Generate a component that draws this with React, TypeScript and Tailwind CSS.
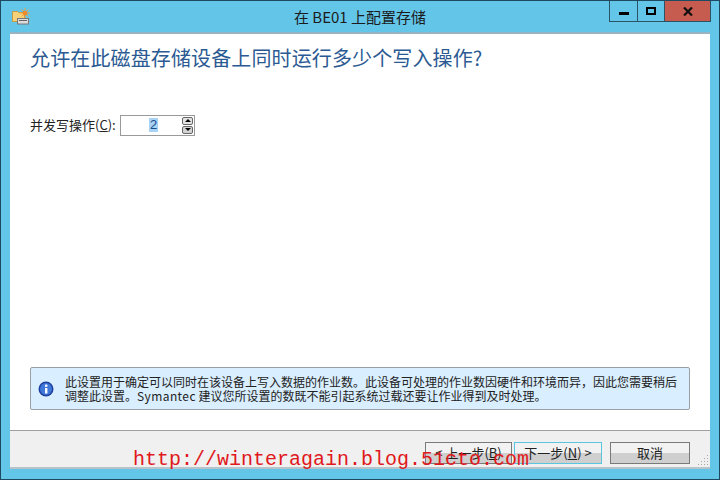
export default function App() {
  const cjk = { fontFamily: '"Noto Sans CJK SC", sans-serif' };
  const grip = [[9,0],[6,3],[9,3],[3,6],[6,6],[9,6],[0,9],[3,9],[6,9],[9,9]];
  return (
    <div className="relative w-[720px] h-[480px] overflow-hidden bg-[#63c6e9] border border-[#1d4a60] flex flex-col" style={{ fontFamily: '"Noto Sans CJK SC", "Noto Sans", sans-serif' }}>
      <div className="h-[31px] shrink-0 flex items-start relative">
        <svg className="absolute left-[11px] top-[7px]" width="18" height="17" viewBox="0 0 18 17">
          <path d="M0.5 3.5h5l1 1h6v9h-12z" fill="#f5d27a" stroke="#c79a45" strokeWidth="1" />
          <circle cx="13" cy="5" r="2.5" fill="#f08a28" />
          <path d="M13 0v2M13 8v2M8 5h2M16 5h2M9.5 1.5l1.5 1.5M15 7l1.5 1.5M9.5 8.5L11 7M15 3l1.5-1.5" stroke="#f0a040" strokeWidth="1" />
          <rect x="5.5" y="10.5" width="11" height="5.5" fill="#dcdcdc" stroke="#777" />
          <rect x="7" y="12" width="8" height="1" fill="#666" />
        </svg>
        <div className="absolute left-0 right-0 top-[6px] text-center text-[15px] leading-[20px] text-[#1b1b1b]">在 BE01 上配置存储</div>
        <div className="absolute right-[8px] top-0 flex h-[21px] border border-t-0 border-[#2a5368]">
          <div className="w-[28px] flex items-center justify-center border-r border-[#2a5368]"><div className="w-[10px] h-[3px] mt-[4px] bg-black" /></div>
          <div className="w-[26px] flex items-center justify-center"><div className="w-[10px] h-[8px] border-2 border-black" /></div>
          <div className="w-[46px] flex items-center justify-center bg-[#c65b4f] border-l border-[#2a5368]">
            <svg width="10" height="9" viewBox="0 0 10 9"><path d="M1 0.5l8 8M9 0.5l-8 8" stroke="#111" strokeWidth="2.2" /></svg>
          </div>
        </div>
      </div>
      <div className="mx-[9px] flex-1 flex flex-col min-h-0 border-t-2 border-[#97b4c2]">
        <div className="flex-1 bg-white px-[20px] flex flex-col">
          <h1 className="mt-[9px] text-[20px] leading-[30px] font-normal text-[#2b5a93] tracking-[0.13px]" style={cjk}>允许在此磁盘存储设备上同时运行多少个写入操作?</h1>
          <div className="mt-[41px] flex items-center h-[22px] text-[13px] text-[#222]">
            <span className="w-[90px]">并发写操作(<u>C</u>):</span>
            <div className="w-[75px] h-[21px] border border-[#9a9a9a] bg-white relative flex items-center">
              <span className="ml-[28px] px-[1px] bg-[#a9d3f5] text-[#1a4a8a] leading-[14px]" style={{ fontFamily: '"Liberation Sans", sans-serif' }}>2</span>
              <div className="absolute right-[1px] top-[1px] w-[11px] flex flex-col gap-[1px]">
                <div className="h-[8px] rounded-[2px] border border-[#666] bg-[#e4e4e4] flex items-center justify-center"><div className="w-0 h-0 border-x-[3px] border-x-transparent border-b-[3px] border-b-black" /></div>
                <div className="h-[8px] rounded-[2px] border border-[#666] bg-[#d4d4d4] flex items-center justify-center"><div className="w-0 h-0 border-x-[3px] border-x-transparent border-t-[3px] border-t-black" /></div>
              </div>
            </div>
          </div>
          <div className="flex-1" />
          <div className="mb-[20px] h-[43px] w-[660px] rounded-[2px] border border-[#9a9fa5] bg-[#d9eeff] flex items-center">
            <svg className="ml-[7px] shrink-0" width="16" height="16" viewBox="0 0 16 16">
              <circle cx="8" cy="8" r="7.5" fill="#1f3f9e" />
              <circle cx="8" cy="8" r="6" fill="#3f78d8" />
              <rect x="7" y="7" width="2.4" height="5.5" fill="#fff" />
              <rect x="7" y="3.6" width="2.4" height="2.2" fill="#fff" />
            </svg>
            <p className="ml-[11px] text-[12px] leading-[14px] text-[#222] whitespace-nowrap" style={cjk}>
              此设置用于确定可以同时在该设备上写入数据的作业数。此设备可处理的作业数因硬件和环境而异{"\uFF0C"}因此您需要稍后<br />
              调整此设置。<span className="tracking-[0.4px]">Symantec</span> 建议您所设置的数既不能引起系统过载还要让作业得到及时处理。
            </p>
          </div>
        </div>
        <div className="h-[39px] shrink-0 bg-[#f0f0f0] border-t border-[#a0a0a0] border-b-2 border-b-[#b7c3c9] flex items-start justify-end pt-[11px] pr-[20px] text-[13px] text-[#222] relative">
          <button className="w-[87px] h-[22px] border border-[#7a7a7a] bg-[linear-gradient(#f2f2f2_50%,#cfcfcf_50%)] leading-[20px]">&lt; 上一步(<u>B</u>)</button>
          <button className="ml-[2px] w-[88px] h-[22px] border border-[#5bc5e0] bg-[linear-gradient(#f2f2f2_50%,#cfcfcf_50%)] leading-[20px]">下一步(<u>N</u>) &gt;</button>
          <button className="ml-[8px] w-[80px] h-[22px] border border-[#7a7a7a] bg-[linear-gradient(#f2f2f2_50%,#cfcfcf_50%)] leading-[20px]">取消</button>
          <svg className="absolute right-[1px] bottom-[1px]" width="11" height="11" viewBox="0 0 11 11">
            {grip.map(([x, y]) => <rect key={`${x}-${y}`} x={x} y={y} width="1" height="1" fill="#a8a8a8" />)}
          </svg>
        </div>
      </div>
      <div className="h-[10px] shrink-0" />
      <div className="absolute left-[132px] top-[446px] text-[#e0191c] text-[20px] leading-[26px] whitespace-nowrap" style={{ fontFamily: '"Liberation Mono", monospace' }}>http://winteragain.blog.51cto.com</div>
    </div>
  );
}
